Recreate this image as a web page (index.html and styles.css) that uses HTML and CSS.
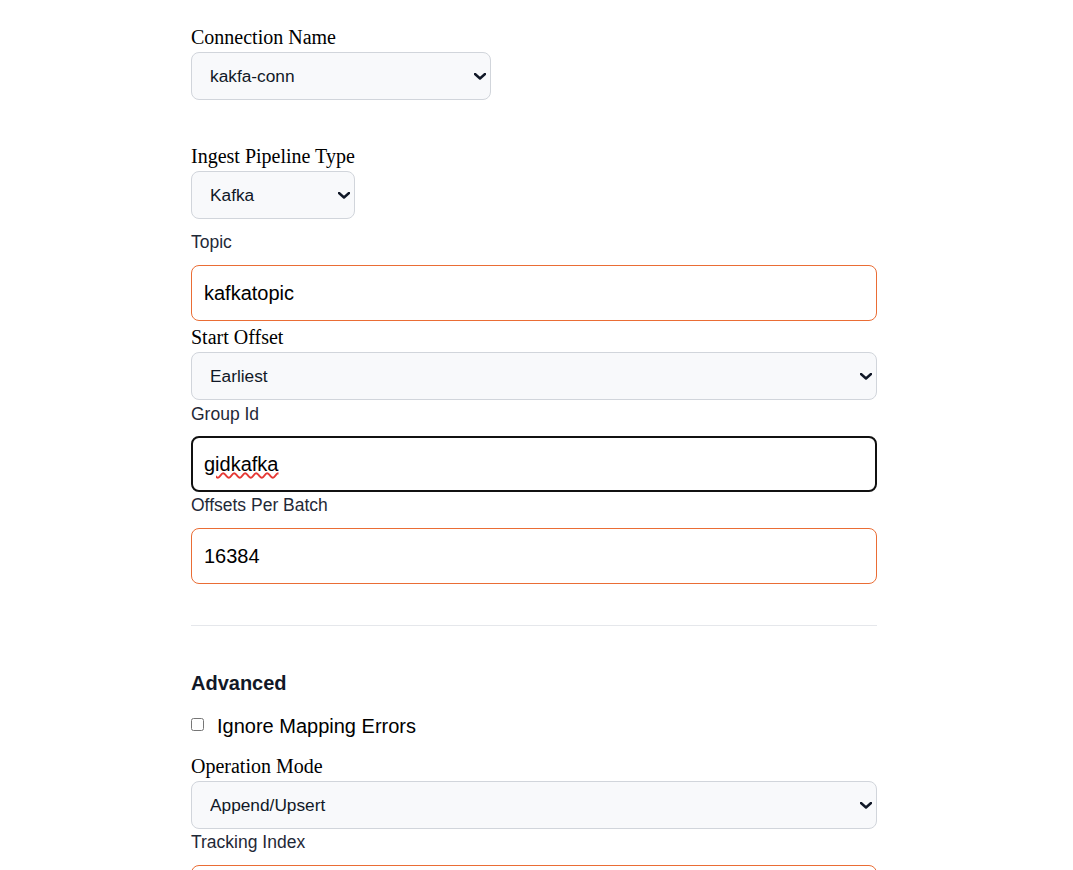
FILE: index.html
```html
<!DOCTYPE html>
<html lang="en">
<head>
    <meta charset="UTF-8">
    <meta name="viewport" content="width=device-width, initial-scale=1.0">
    <title>Ingest Pipeline</title>
    <link rel="stylesheet" href="styles.css">
</head>
<body>
    <form class="pipeline-form">
        <label class="field-title" for="conn">Connection Name</label>
        <div class="select-wrap wrap-conn">
            <select id="conn" class="picker">
                <option>kakfa-conn</option>
            </select>
            <svg class="chevron" width="12" height="7" viewBox="0 0 12 7"><polyline points="1,1 6,5.5 11,1" /></svg>
        </div>

        <label class="field-title" for="type">Ingest Pipeline Type</label>
        <div class="select-wrap wrap-type">
            <select id="type" class="picker">
                <option>Kafka</option>
            </select>
            <svg class="chevron" width="12" height="7" viewBox="0 0 12 7"><polyline points="1,1 6,5.5 11,1" /></svg>
        </div>

        <label class="field-label label-topic" for="topic">Topic</label>
        <input id="topic" class="text-field input-topic" type="text" value="kafkatopic">

        <label class="field-title" for="offset">Start Offset</label>
        <div class="select-wrap wrap-offset">
            <select id="offset" class="picker">
                <option>Earliest</option>
            </select>
            <svg class="chevron" width="12" height="7" viewBox="0 0 12 7"><polyline points="1,1 6,5.5 11,1" /></svg>
        </div>

        <label class="field-label label-group" for="group">Group Id</label>
        <div class="input-wrap">
            <input id="group" class="text-field text-field-active" type="text" value="gidkafka" spellcheck="false">
            <!-- spellcheck squiggle -->
            <span class="misspelled">gidkafka</span>
        </div>

        <label class="field-label" for="batch">Offsets Per Batch</label>
        <input id="batch" class="text-field" type="text" value="16384">

        <hr class="divider">

        <h3 class="section-title">Advanced</h3>
        <label class="check-row">
            <input type="checkbox">
            <span>Ignore Mapping Errors</span>
        </label>

        <label class="field-title" for="mode">Operation Mode</label>
        <div class="select-wrap wrap-mode">
            <select id="mode" class="picker">
                <option>Append/Upsert</option>
            </select>
            <svg class="chevron" width="12" height="7" viewBox="0 0 12 7"><polyline points="1,1 6,5.5 11,1" /></svg>
        </div>

        <label class="field-label" for="tracking">Tracking Index</label>
        <input id="tracking" class="text-field" type="text" value="">
    </form>
</body>
</html>
```

FILE: styles.css
```css
body {
    margin: 0;
    background: #ffffff;
    font-family: 'Liberation Sans', Arial, sans-serif;
}

.pipeline-form {
    display: flex;
    flex-direction: column;
    align-items: flex-start;
    width: 686px;
    margin-left: 191px;
    padding-top: 26px;
}

/* Serif titles above the dropdowns */
.field-title {
    font-family: 'Liberation Serif', 'Times New Roman', serif;
    font-size: 20px;
    line-height: 22px;
    color: #000000;
    margin-bottom: 4px;
}

/* Small sans labels above the text inputs */
.field-label {
    font-size: 17.5px;
    line-height: 20px;
    color: #1f2937;
    margin-bottom: 13px;
}

.label-group {
    margin-bottom: 12px;
}

/* Dropdowns */
.select-wrap {
    position: relative;
    height: 48px;
}

.wrap-conn {
    width: 300px;
    margin-bottom: 45px;
}

.wrap-type {
    width: 164px;
    margin-bottom: 13px;
}

.wrap-offset {
    width: 100%;
    margin-bottom: 4px;
}

.wrap-mode {
    width: 100%;
    margin-bottom: 3px;
}

.picker {
    appearance: none;
    -webkit-appearance: none;
    box-sizing: border-box;
    width: 100%;
    height: 48px;
    margin: 0;
    padding: 0 30px 0 18px;
    font-family: 'Liberation Sans', Arial, sans-serif;
    font-size: 17.3px;
    color: #111827;
    background-color: #f8f9fb;
    border: 1px solid #d1d5db;
    border-radius: 8px;
}

.chevron {
    position: absolute;
    right: 5px;
    top: 21px;
    pointer-events: none;
}

.chevron polyline {
    fill: none;
    stroke: #111827;
    stroke-width: 2.4;
    stroke-linecap: round;
    stroke-linejoin: round;
}

/* Text inputs */
.text-field {
    box-sizing: border-box;
    width: 100%;
    height: 56px;
    margin: 0 0 4px;
    padding: 0 12px;
    font-family: 'Liberation Sans', Arial, sans-serif;
    font-size: 20px;
    color: #000000;
    background: #ffffff;
    border: 1px solid #ea6d35;
    border-radius: 8px;
    outline: none;
}

.input-topic {
    margin-bottom: 5px;
}

.input-wrap {
    position: relative;
    width: 100%;
    margin-bottom: 3px;
}

.input-wrap .text-field {
    display: block;
    margin: 0;
}

.text-field-active {
    border: 2px solid #111111;
    padding: 0 11px;
}

.misspelled {
    position: absolute;
    left: 13px;
    top: 0;
    font-size: 20px;
    line-height: 56px;
    color: transparent;
    text-decoration: underline wavy #e53935;
    text-decoration-thickness: 1.5px;
    text-underline-offset: 1px;
    pointer-events: none;
}

#batch {
    margin-bottom: 0;
}

.divider {
    width: 100%;
    margin: 41px 0 0;
    border: none;
    border-top: 1px solid #e5e7eb;
}

.section-title {
    margin: 46px 0 0;
    font-size: 20px;
    line-height: 22px;
    font-weight: bold;
    color: #111827;
}

.check-row {
    display: flex;
    align-items: flex-start;
    margin: 21px 0 18px;
    font-size: 20px;
    line-height: 22px;
    color: #000000;
}

.check-row input {
    width: 13px;
    height: 13px;
    margin: 3px 13px 0 0;
}
```
